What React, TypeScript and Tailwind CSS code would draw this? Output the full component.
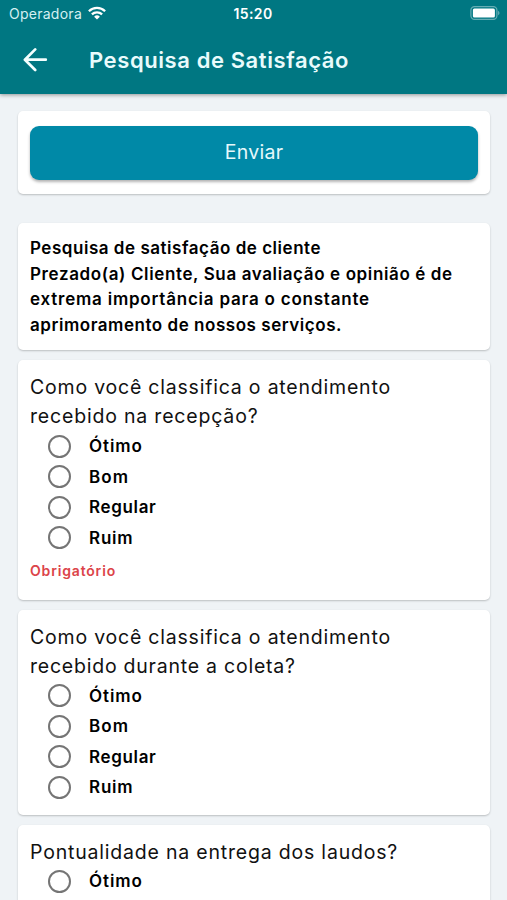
import { useState, type ReactNode } from 'react';

interface Pergunta {
  id: string;
  linhas: { texto: string; espaco: string }[];
  opcoes: string[];
  obrigatoria?: boolean;
}

const espacoOpcao: Record<string, string> = {
  'Ótimo': 'tracking-[0.95px]',
  Bom: 'tracking-[1.05px]',
  Regular: 'tracking-[0.65px]',
  Ruim: 'tracking-[0.8px]',
};

const perguntas: Pergunta[] = [
  {
    id: 'recepcao',
    linhas: [
      { texto: 'Como você classifica o atendimento', espaco: 'tracking-[0.79px]' },
      { texto: 'recebido na recepção?', espaco: 'tracking-[0.81px]' },
    ],
    opcoes: ['Ótimo', 'Bom', 'Regular', 'Ruim'],
    obrigatoria: true,
  },
  {
    id: 'coleta',
    linhas: [
      { texto: 'Como você classifica o atendimento', espaco: 'tracking-[0.79px]' },
      { texto: 'recebido durante a coleta?', espaco: 'tracking-[0.77px]' },
    ],
    opcoes: ['Ótimo', 'Bom', 'Regular', 'Ruim'],
  },
  {
    id: 'laudos',
    linhas: [{ texto: 'Pontualidade na entrega dos laudos?', espaco: 'tracking-[0.8px]' }],
    opcoes: ['Ótimo'],
  },
];

function Card({ children, className = '' }: { children: ReactNode; className?: string }) {
  return (
    <section
      className={`shrink-0 rounded-[5px] bg-white px-3 shadow-[0_1px_2px_rgba(0,0,0,0.22)] ${className}`}
    >
      {children}
    </section>
  );
}

function StatusBar() {
  return (
    <div className="grid h-[27px] grid-cols-3 items-center pr-[7px] pl-[9px] text-sm text-white">
      <div className="flex items-center gap-[6px]">
        <span className="tracking-[0.26px] text-[#d5f0f2]">Operadora</span>
        <svg className="-mt-[2px]" width="18" height="14" viewBox="0 0 18 14" fill="none" stroke="white" strokeWidth="2.3">
          <path d="M0.9 5.2a11.6 11.6 0 0 1 16.2 0" />
          <path d="M3.9 8.4a7.3 7.3 0 0 1 10.2 0" />
          <path d="M9 13.6 6.1 10.7a4.1 4.1 0 0 1 5.8 0z" fill="white" stroke="none" />
        </svg>
      </div>
      <span className="-ml-[3px] text-center font-semibold tracking-[0.4px]">15:20</span>
      <svg className="-mt-px justify-self-end" width="30" height="14" viewBox="0 0 30 14" fill="none">
        <rect x="0.9" y="0.6" width="26" height="12.8" rx="3.6" stroke="white" strokeOpacity="0.4" strokeWidth="1.2" />
        <rect x="2.9" y="2.4" width="22" height="9" rx="1.5" fill="white" />
        <path d="M28.2 4.8c1.7.7 1.7 3.7 0 4.4z" fill="white" fillOpacity="0.45" />
      </svg>
    </div>
  );
}

export default function App() {
  const [respostas, setRespostas] = useState<Record<string, string>>({});

  return (
    <div className="flex h-[900px] w-[507px] flex-col overflow-hidden bg-[#eff3f6] font-[Inter,sans-serif] whitespace-nowrap text-[#111]">
      <header className="z-10 h-[94px] shrink-0 bg-[#007782] shadow-[0_1px_4px_rgba(0,0,0,0.4)]">
        <StatusBar />
        <div className="flex h-[66px] items-center pl-[23px]">
          <button aria-label="Voltar" className="mr-[41px]">
            <svg width="25" height="26" viewBox="0 0 25 26" fill="none" stroke="#f4ffff" strokeWidth="2.7" strokeLinecap="round" strokeLinejoin="round">
              <path d="M22.8 12.7H2M12.2 2.4 1.9 12.7l10.3 10.3" />
            </svg>
          </button>
          <h1 className="text-[22px] font-semibold tracking-[0.59px] text-[#e9fbfc]">Pesquisa de Satisfação</h1>
        </div>
      </header>

      <main className="flex flex-col gap-[10px] px-[18px] pr-[17px] pt-[17px]">
        <Card className="mb-[19px] h-[83px] pt-[14.5px]">
          <button className="h-[54px] w-full rounded-[9px] bg-[#0089a7] pt-px text-[19.5px] tracking-[0.3px] text-[#e6f8fb] shadow-[0_2px_3px_rgba(0,0,0,0.3)]">
            Enviar
          </button>
        </Card>

        <Card className="h-[127px] pt-[13px] text-[17px] leading-[25.7px] font-semibold text-black">
          <p className="tracking-[0.53px]">Pesquisa de satisfação de cliente</p>
          <p className="tracking-[0.62px]">Prezado(a) Cliente, Sua avaliação e opinião é de</p>
          <p className="tracking-[0.78px]">extrema importância para o constante</p>
          <p className="tracking-[0.54px]">aprimoramento de nossos serviços.</p>
        </Card>

        {perguntas.map((p) => (
          <Card key={p.id} className={p.obrigatoria ? 'pt-[13px] pb-[18px]' : 'pt-[13px] pb-[11.5px] last:pb-12'}>
            <h2 className="text-[19.5px] leading-[29.3px]">
              {p.linhas.map((l) => (
                <span key={l.texto} className={`block ${l.espaco}`}>
                  {l.texto}
                </span>
              ))}
            </h2>
            {p.opcoes.map((nome) => (
              <label key={nome} className="flex h-[30.5px] items-center gap-[18px] pl-[18px]">
                <input
                  type="radio"
                  name={p.id}
                  checked={respostas[p.id] === nome}
                  onChange={() => setRespostas({ ...respostas, [p.id]: nome })}
                  className="-mt-[1.5px] size-[23px] appearance-none rounded-full border-[2.5px] border-[#757575] checked:border-[7px] checked:border-[#0089a7]"
                />
                <span className={`text-[17px] font-semibold text-black ${espacoOpcao[nome]}`}>{nome}</span>
              </label>
            ))}
            {p.obrigatoria && (
              <p className="pt-[6px] text-[14px] leading-[22px] font-semibold tracking-[0.83px] text-[#dc4449]">Obrigatório</p>
            )}
          </Card>
        ))}
      </main>
    </div>
  );
}
